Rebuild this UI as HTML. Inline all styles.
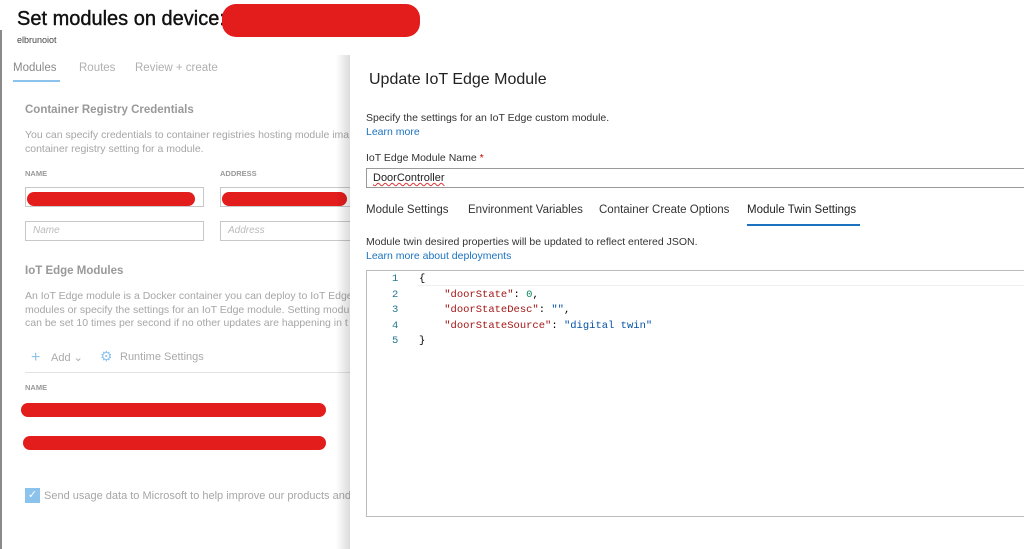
<!DOCTYPE html>
<html><head><meta charset="utf-8"><style>
*{box-sizing:border-box;margin:0;padding:0}
body{width:1024px;height:549px;overflow:hidden;background:#fff;font-family:"Liberation Sans",sans-serif;position:relative}
.a{position:absolute;white-space:nowrap}
.red{position:absolute;background:#e31c1c;border-radius:10px}
.l{color:#a6a6a6;font-size:10.5px}
.inp{position:absolute;border:1px solid #c8c8c8;height:20px}
.mono{font-family:"Liberation Mono",monospace;font-size:10.5px}
</style></head><body>
<div class="a" style="left:0;top:30px;width:2px;height:519px;background:#8a8a8a"></div>
<div class="a" style="left:17px;top:8px;font-size:20px;color:#111;-webkit-text-stroke:0.4px #111">Set modules on device:</div>
<div class="red" style="left:222px;top:4px;width:198px;height:33px;border-radius:14px"></div>
<div class="a" style="left:17px;top:35px;font-size:9px;color:#444">elbrunoiot</div>
<div class="a" style="left:13px;top:62px;font-size:11.5px;color:#8a8a8a">Modules</div>
<div class="a" style="left:13px;top:80px;width:47px;height:2px;background:#8cc3ec"></div>
<div class="a" style="left:79px;top:62px;font-size:11.5px;color:#b0b0b0">Routes</div>
<div class="a" style="left:135px;top:62px;font-size:11.5px;color:#b0b0b0">Review + create</div>
<div class="a" style="left:25px;top:104px;font-size:11.5px;font-weight:bold;color:#999">Container Registry Credentials</div>
<div class="a l" style="left:25px;top:129px;line-height:13.5px;font-size:10.5px">You can specify credentials to container registries hosting module ima<br>container registry setting for a module.</div>
<div class="a" style="left:25px;top:169px;font-size:7.5px;color:#999;font-weight:bold">NAME</div>
<div class="a" style="left:220px;top:169px;font-size:7.5px;color:#999;font-weight:bold">ADDRESS</div>
<div class="inp" style="left:25px;top:187px;width:179px"></div>
<div class="inp" style="left:220px;top:187px;width:140px"></div>
<div class="red" style="left:27px;top:192px;width:168px;height:14px"></div>
<div class="red" style="left:222px;top:192px;width:125px;height:14px"></div>
<div class="inp" style="left:25px;top:221px;width:179px"></div>
<div class="inp" style="left:220px;top:221px;width:140px"></div>
<div class="a" style="left:33px;top:225px;font-size:10px;font-style:italic;color:#bbb">Name</div>
<div class="a" style="left:228px;top:225px;font-size:10px;font-style:italic;color:#bbb">Address</div>
<div class="a" style="left:25px;top:265px;font-size:11.5px;font-weight:bold;color:#999">IoT Edge Modules</div>
<div class="a l" style="left:25px;top:290px;line-height:13.5px">An IoT Edge module is a Docker container you can deploy to IoT Edge<br>modules or specify the settings for an IoT Edge module. Setting modu<br>can be set 10 times per second if no other updates are happening in t</div>
<div class="a" style="left:31px;top:349px;font-size:16px;color:#8cc3ec">+</div>
<div class="a" style="left:51px;top:351px;font-size:11px;color:#aaa">Add &#8964;</div>
<div class="a" style="left:100px;top:348px;font-size:14px;color:#8cc3ec">⚙</div>
<div class="a" style="left:120px;top:351px;font-size:11px;color:#aaa">Runtime Settings</div>
<div class="a" style="left:25px;top:372px;width:330px;height:1px;background:#e3e3e3"></div>
<div class="a" style="left:25px;top:383px;font-size:7.5px;color:#999;font-weight:bold">NAME</div>
<div class="red" style="left:21px;top:403px;width:305px;height:14px"></div>
<div class="red" style="left:23px;top:436px;width:303px;height:14px"></div>
<div class="a" style="left:25px;top:488px;width:15px;height:15px;background:#8cc3ec;color:#fff;font-size:11px;text-align:center;line-height:15px">✓</div>
<div class="a l" style="left:44px;top:490px;font-size:11px">Send usage data to Microsoft to help improve our products and s</div>
<div class="a" style="left:336px;top:55px;width:14px;height:494px;background:linear-gradient(to right,rgba(255,255,255,0),rgba(0,0,0,.14))"></div>
<div class="a" style="left:350px;top:55px;width:674px;height:494px;background:#fff"></div>
<div class="a" style="left:369px;top:71px;font-size:16px;color:#222">Update IoT Edge Module</div>
<div class="a" style="left:366px;top:112px;font-size:10.5px;color:#333">Specify the settings for an IoT Edge custom module.</div>
<div class="a" style="left:366px;top:126px;font-size:10.5px;color:#1b72c0">Learn more</div>
<div class="a" style="left:366px;top:152px;font-size:10.5px;color:#333">IoT Edge Module Name <span style="color:#c00">*</span></div>
<div class="a" style="left:366px;top:168px;width:670px;height:20px;border:1px solid #999"></div>
<div class="a" style="left:373px;top:172px;font-size:11px;color:#222;text-decoration:underline wavy #d33;text-decoration-thickness:1px">DoorController</div>
<div class="a" style="left:366px;top:204px;font-size:11.5px;color:#333">Module Settings</div>
<div class="a" style="left:468px;top:204px;font-size:11.5px;color:#333">Environment Variables</div>
<div class="a" style="left:599px;top:204px;font-size:11.5px;color:#333">Container Create Options</div>
<div class="a" style="left:747px;top:204px;font-size:11.5px;color:#222">Module Twin Settings</div>
<div class="a" style="left:747px;top:224px;width:113px;height:2px;background:#1b72c0"></div>
<div class="a" style="left:366px;top:236px;font-size:10.5px;color:#333">Module twin desired properties will be updated to reflect entered JSON.</div>
<div class="a" style="left:366px;top:250px;font-size:10.5px;color:#1b72c0">Learn more about deployments</div>
<div class="a" style="left:366px;top:270px;width:670px;height:247px;border:1px solid #bbb"></div>
<div class="a" style="left:418px;top:271px;width:606px;height:15px;border-bottom:1px solid #eee"></div>
<div class="a mono" style="left:392px;top:272px;line-height:15.5px;color:#237893">1<br>2<br>3<br>4<br>5</div>
<div class="a mono" style="left:419px;top:272px;line-height:15.5px;color:#000">{<br>&nbsp;&nbsp;&nbsp;&nbsp;<span style="color:#a31515">"doorState"</span>: <span style="color:#098658">0</span>,<br>&nbsp;&nbsp;&nbsp;&nbsp;<span style="color:#a31515">"doorStateDesc"</span>: <span style="color:#0451a5">""</span>,<br>&nbsp;&nbsp;&nbsp;&nbsp;<span style="color:#a31515">"doorStateSource"</span>: <span style="color:#0451a5">"digital twin"</span><br>}</div>
</body></html>
